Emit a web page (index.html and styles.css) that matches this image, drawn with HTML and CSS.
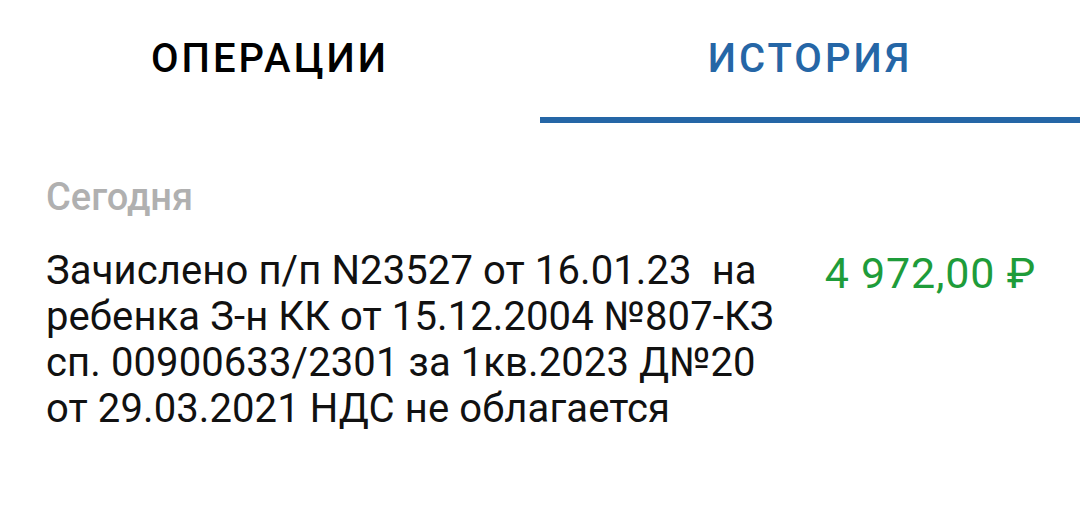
FILE: index.html
```html
<!DOCTYPE html>
<html lang="ru">
<head>
<meta charset="utf-8">
<link rel="stylesheet" href="styles.css">
</head>
<body>
<div class="tabs">
  <div class="tab">ОПЕРАЦИИ</div>
  <div class="tab active">ИСТОРИЯ</div>
</div>
<div class="content">
  <div class="day">Сегодня</div>
  <div class="op">
    <div class="desc">Зачислено п/п N23527 от 16.01.23&nbsp; на ребенка З-н КК от 15.12.2004 №807-КЗ сп. 00900633/2301 за 1кв.2023 Д№20 от 29.03.2021 НДС не облагается</div>
    <div class="amount">4 972,00 ₽</div>
  </div>
</div>
</body>
</html>
```
FILE: styles.css
```css
html, body {
  margin: 0;
  padding: 0;
  background: #ffffff;
  font-family: Roboto, "Noto Sans", sans-serif;
}
.tabs {
  display: flex;
  height: 123px;
}
.tab {
  flex: 1;
  display: flex;
  justify-content: center;
  align-items: center;
  padding-bottom: 6px;
  font-size: 40px;
  font-weight: 500;
  letter-spacing: 3px;
  color: #000000;
  box-sizing: border-box;
}
.tab.active {
  color: #2566a6;
  border-bottom: 6px solid #2566a6;
  padding-bottom: 0;
}
.content {
  padding: 52px 44px 0 46px;
}
.day {
  font-size: 38px;
  font-weight: 500;
  color: #b0b0b0;
  line-height: 44px;
}
.op {
  display: flex;
  justify-content: space-between;
  margin-top: 29px;
}
.desc {
  width: 750px;
  font-size: 40px;
  line-height: 46px;
  letter-spacing: 0.1px;
  color: #111111;
}
.amount {
  font-size: 43px;
  line-height: 46px;
  letter-spacing: 0.8px;
  padding-top: 2px;
  color: #1e9c3a;
  white-space: nowrap;
}
```
